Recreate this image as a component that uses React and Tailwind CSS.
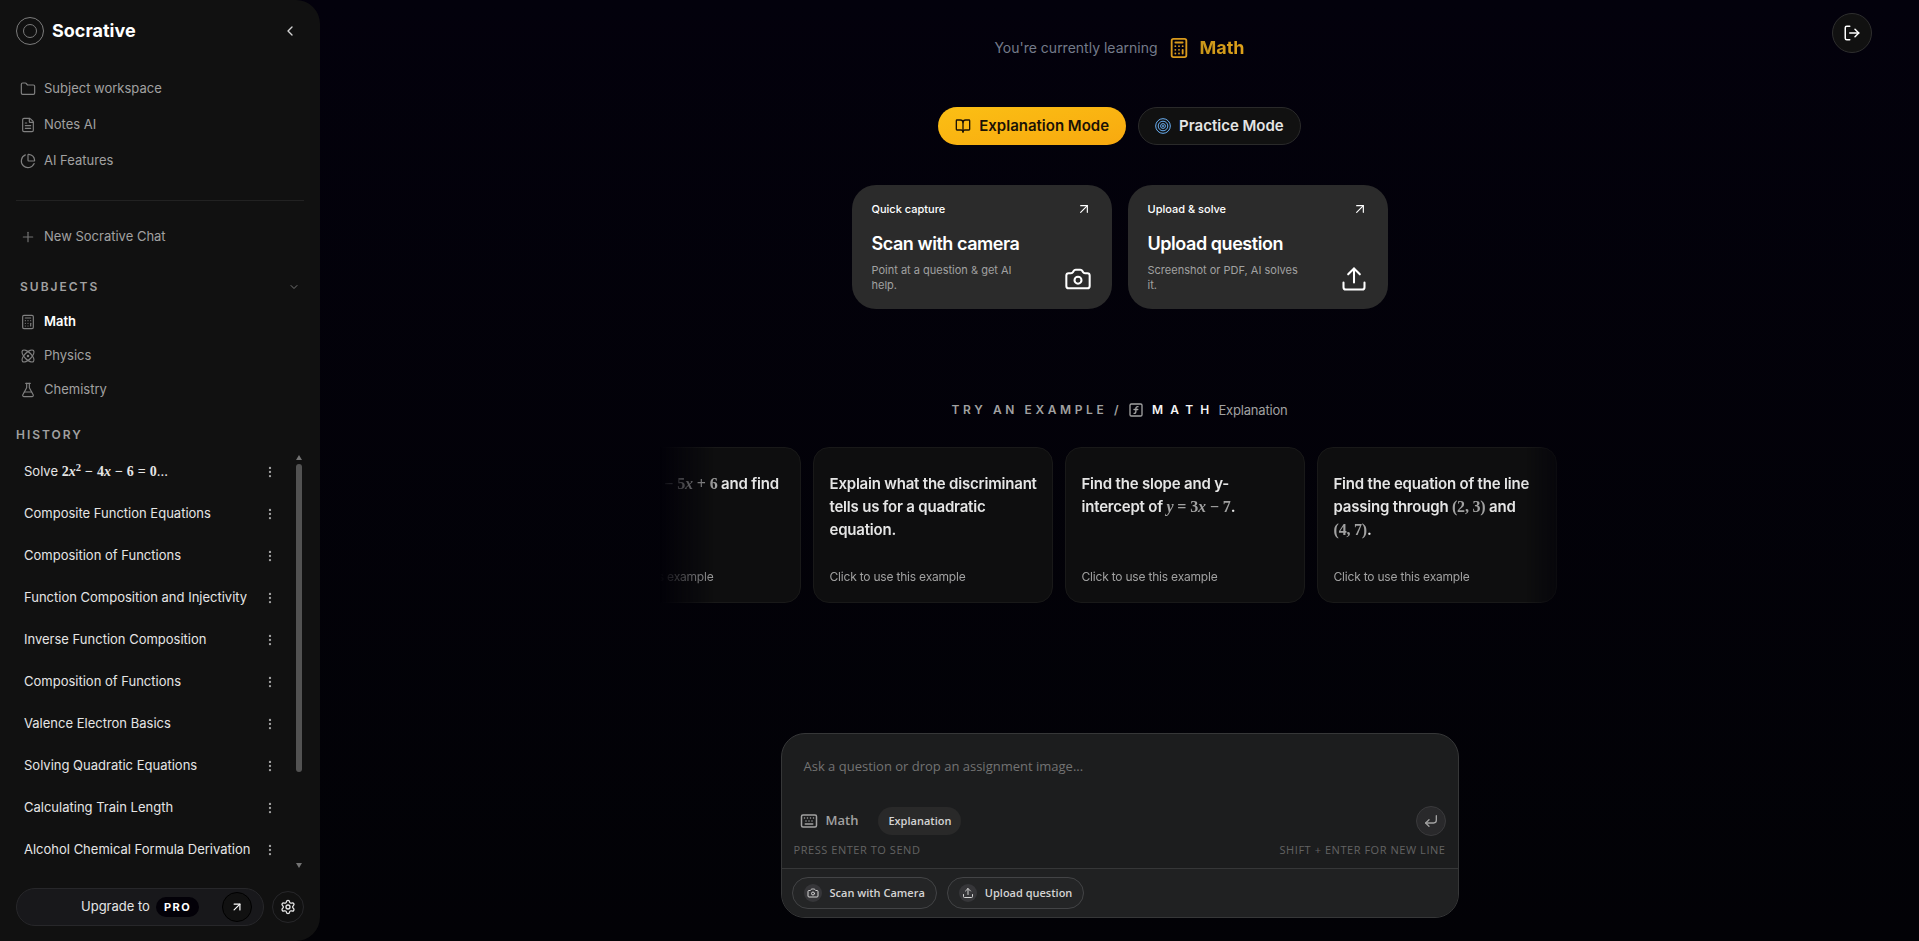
import React, { useState } from "react";
import {
  ArrowUpRight,
  Atom,
  BookOpen,
  Calculator,
  Camera,
  ChartPie,
  ChevronDown,
  ChevronLeft,
  CornerDownLeft,
  EllipsisVertical,
  FileText,
  FlaskConical,
  Folder,
  Keyboard,
  LogOut,
  Plus,
  Settings,
  SquareFunction,
  Upload,
} from "lucide-react";

const navItems = [
  { label: "Subject workspace", icon: Folder },
  { label: "Notes AI", icon: FileText },
  { label: "AI Features", icon: ChartPie },
];

const subjects = [
  { label: "Math", icon: Calculator },
  { label: "Physics", icon: Atom },
  { label: "Chemistry", icon: FlaskConical },
];

// Inline math
const Tex = ({ children, className = "" }) => (
  <span className={`leading-none whitespace-nowrap font-['Liberation_Serif',serif] ${className}`}>
    {children}
  </span>
);

const Op = ({ children }) => <span className="mx-1">{children}</span>;

const history = [
  <>
    Solve{" "}
    <Tex className="text-sm font-bold">
      2<i>x</i>
      <sup>2</sup>
      <Op>−</Op>4<i>x</i>
      <Op>−</Op>6<Op>=</Op>0
    </Tex>
    ...
  </>,
  "Composite Function Equations",
  "Composition of Functions",
  "Function Composition and Injectivity",
  "Inverse Function Composition",
  "Composition of Functions",
  "Valence Electron Basics",
  "Solving Quadratic Equations",
  "Calculating Train Length",
  "Alcohol Chemical Formula Derivation",
];

const texStyle = "text-base font-bold text-neutral-400";

const examples = [
  <>
    Factorise{" "}
    <Tex className={texStyle}>
      <i>x</i>
      <sup>2</sup>
      <Op>−</Op>5<i>x</i>
      <Op>+</Op>6
    </Tex>{" "}
    and find the roots.
  </>,
  "Explain what the discriminant tells us for a quadratic equation.",
  <>
    Find the slope and y-intercept of{" "}
    <Tex className={texStyle}>
      <i>y</i>
      <Op>=</Op>3<i>x</i>
      <Op>−</Op>7
    </Tex>
    .
  </>,
  <>
    Find the equation of the line passing through <Tex className={texStyle}>(2, 3)</Tex> and{" "}
    <Tex className={texStyle}>(4, 7)</Tex>.
  </>,
];

const TargetIcon = () => (
  <svg viewBox="0 0 24 24" className="size-4" fill="none" stroke="#6bb0f3" strokeWidth="1.5">
    <circle cx="12" cy="12" r="11" />
    <circle cx="12" cy="12" r="7.2" />
    <circle cx="12" cy="12" r="3.6" />
    <circle cx="12" cy="12" r="0.8" fill="#6bb0f3" />
  </svg>
);

const Logo = () => (
  <svg viewBox="0 0 28 28" className="size-7" fill="none" stroke="#7c7c7c">
    <circle cx="14" cy="14" r="13.5" />
    <circle cx="14" cy="14" r="6.5" />
  </svg>
);

const Sidebar = () => {
  const [subject, setSubject] = useState("Math");

  return (
    <aside className="flex h-screen w-80 shrink-0 flex-col rounded-r-3xl bg-[#111111] px-4 pt-[17px] pb-[15px] text-[13px]">
      <div className="flex items-center gap-2">
        <Logo />
        <h1 className="text-lg font-bold text-white">Socrative</h1>
        <button aria-label="Collapse sidebar" className="ml-auto p-1.5 text-neutral-300">
          <ChevronLeft className="size-4" />
        </button>
      </div>

      <nav className="mt-7 flex flex-col gap-1 border-b border-[#222222] pb-[23px]">
        {navItems.map(({ label, icon: Icon }) => (
          <a key={label} href="#" className="flex h-8 items-center gap-2 px-1 text-neutral-400">
            <Icon className="size-4 text-[#808080]" strokeWidth={1.75} />
            {label}
          </a>
        ))}
      </nav>

      <button className="mt-5 flex h-8 items-center gap-2 px-1 text-neutral-400">
        <Plus className="size-4 text-neutral-500" strokeWidth={1.75} />
        New Socrative Chat
      </button>

      <div className="mt-[26px] flex items-center justify-between px-1">
        <h2 className="text-xs font-semibold tracking-[2px] text-neutral-400">SUBJECTS</h2>
        <ChevronDown className="size-3 text-neutral-500" />
      </div>
      <div className="mt-2.5 flex flex-col">
        {subjects.map(({ label, icon: Icon }) => (
          <button
            key={label}
            onClick={() => setSubject(label)}
            className={`flex h-[34px] items-center gap-2 px-1 ${
              subject === label ? "font-semibold text-white" : "text-neutral-400"
            }`}
          >
            <Icon className="size-4 text-[#808080]" strokeWidth={1.75} />
            {label}
          </button>
        ))}
      </div>

      <h2 className="mt-5 text-xs font-semibold tracking-[2px] text-neutral-400">HISTORY</h2>
      <div className="mt-2 flex min-h-0 flex-1">
        <ul className="flex-1 overflow-hidden">
          {history.map((title, i) => (
            <li key={i} className="flex h-[42px] items-center justify-between pr-[19px] pl-2 text-neutral-200">
              <a href="#" className="truncate">
                {title}
              </a>
              <button aria-label="Chat options" className="text-neutral-400">
                <EllipsisVertical className="size-3.5" />
              </button>
            </li>
          ))}
        </ul>
        {/* Scrollbar */}
        <div className="mt-1 mr-0.5 flex w-1.5 flex-col items-center gap-1">
          <span className="border-x-3 border-b-5 border-x-transparent border-b-neutral-500" />
          <span className="w-full flex-1">
            <span className="block h-[78%] rounded-full bg-[#525252]" />
          </span>
          <span className="border-x-3 border-t-5 border-x-transparent border-t-neutral-500" />
        </div>
      </div>

      <div className="mt-5 flex items-center gap-2">
        <button className="flex h-[38px] flex-1 items-center rounded-full border border-[#27272a] bg-[#18181b] pr-[11px] pl-16 text-[13px] text-neutral-200">
          Upgrade to
          <span className="ml-1.5 rounded-full bg-[#030108] px-2 py-0.5 text-[11px] font-bold tracking-[1.5px] text-white">
            PRO
          </span>
          <span className="ml-auto flex size-[30px] items-center justify-center rounded-full border border-black bg-[#111111]">
            <ArrowUpRight className="size-3.5 text-white" />
          </span>
        </button>
        <button
          aria-label="Settings"
          className="flex size-8 items-center justify-center rounded-full border border-[#27272a] text-neutral-200"
        >
          <Settings className="size-4" />
        </button>
      </div>
    </aside>
  );
};

const ActionCard = ({ tag, title, text, icon: Icon }) => (
  <button className="w-[260px] rounded-3xl bg-[#2b2b2b] px-5 py-4 text-left text-white">
    <span className="flex items-center justify-between text-[11px] leading-4 font-medium">
      {tag}
      <ArrowUpRight className="size-4" strokeWidth={1.75} />
    </span>
    <span className="mt-[15px] block text-lg leading-6 font-semibold tracking-tight">{title}</span>
    <span className="mt-[7px] flex items-end justify-between">
      <span className="w-40 text-[11px] leading-[15px] text-neutral-400">{text}</span>
      <Icon className="size-7" strokeWidth={1.75} />
    </span>
  </button>
);

const Composer = () => {
  const [value, setValue] = useState("");

  return (
    <form
      onSubmit={(e) => e.preventDefault()}
      className="mx-auto w-full max-w-[678px] overflow-hidden rounded-3xl border border-[#363738] bg-[#1c1d1e] font-['Open_Sans','Noto_Sans',sans-serif]"
    >
      <div className="px-3 pt-5 pb-2.5">
        <textarea
          rows={1}
          aria-label="Question"
          value={value}
          onChange={(e) => setValue(e.target.value)}
          placeholder="Ask a question or drop an assignment image..."
          className="block h-[52px] w-full resize-none bg-transparent px-2.5 text-[13px] leading-6 text-neutral-200 outline-none placeholder:text-[#737373]"
        />
        <div className="flex items-center">
          <button
            type="button"
            className="flex items-center gap-2 px-1.5 text-[13px] font-semibold text-neutral-400"
          >
            <Keyboard className="size-[18px]" />
            Math
          </button>
          <button
            type="button"
            className="ml-3.5 h-7 rounded-full bg-[#292929] px-2.5 text-[11px] font-semibold text-neutral-300"
          >
            Explanation
          </button>
          <button
            aria-label="Send"
            className="ml-auto flex size-[30px] items-center justify-center rounded-full border border-[#3a3a3c] bg-[#29292b] text-neutral-400"
          >
            <CornerDownLeft className="size-4" />
          </button>
        </div>
        <div className="mt-1.5 flex justify-between text-[11px] leading-4 tracking-wider text-[#636363]">
          <span>PRESS ENTER TO SEND</span>
          <span>SHIFT + ENTER FOR NEW LINE</span>
        </div>
      </div>
      <div className="flex gap-2.5 border-t border-[#363738] bg-[#202122] px-2.5 py-2 text-[11px] font-semibold text-neutral-300">
        <button
          type="button"
          className="flex h-8 items-center gap-2 rounded-full border border-[#434446] bg-[#242526] px-[11px]"
        >
          <span className="flex size-[18px] items-center justify-center rounded-full bg-[#363639]">
            <Camera className="size-3" />
          </span>
          Scan with Camera
        </button>
        <button
          type="button"
          className="flex h-8 items-center gap-2 rounded-full border border-[#434446] bg-[#242526] px-[11px]"
        >
          <span className="flex size-[18px] items-center justify-center rounded-full bg-[#363639]">
            <Upload className="size-3" />
          </span>
          Upload question
        </button>
      </div>
    </form>
  );
};

const App = () => {
  return (
    <div className="flex h-screen overflow-hidden bg-linear-to-b from-[#03010c] to-[#020206] font-[Inter,sans-serif]">
      <Sidebar />

      <main className="relative flex min-w-0 flex-1 flex-col pt-[34px] pb-[23px]">
        <button
          aria-label="Log out"
          className="absolute top-[13px] right-[47px] flex size-10 items-center justify-center rounded-full border border-[#2e2e2e] bg-[#111111] text-white"
        >
          <LogOut className="size-[18px]" />
        </button>

        <div className="flex items-center justify-center">
          <p className="text-sm text-[#747b8a]">You're currently learning</p>
          <Calculator className="ml-2.5 size-[22px] text-[#d99a1c]" />
          <p className="ml-2.5 bg-linear-to-r from-[#c8961a] to-[#e0a21a] bg-clip-text text-lg font-bold text-transparent">
            Math
          </p>
        </div>

        <div className="mt-[45px] flex justify-center gap-3 text-[15px] font-semibold">
          <button className="flex h-[38px] items-center gap-2 rounded-full bg-linear-to-br from-[#fbbf14] to-[#f8a90f] px-[17px] text-[#1a1206]">
            <BookOpen className="size-4" />
            Explanation Mode
          </button>
          <button className="flex h-[38px] items-center gap-2 rounded-full border border-[#2a2a2a] bg-[#111111] px-4 text-neutral-200">
            <TargetIcon />
            Practice Mode
          </button>
        </div>

        <div className="mt-10 flex justify-center gap-4">
          <ActionCard
            tag="Quick capture"
            title="Scan with camera"
            text="Point at a question & get AI help."
            icon={Camera}
          />
          <ActionCard
            tag="Upload & solve"
            title="Upload question"
            text="Screenshot or PDF, AI solves it."
            icon={Upload}
          />
        </div>

        {/* Example carousel */}
        <section className="mt-[91px]">
          <h2 className="flex items-center justify-center text-xs leading-5 font-semibold text-neutral-400">
            <span className="tracking-[0.3em]">TRY AN EXAMPLE /</span>
            <SquareFunction className="mr-2 ml-1.5 size-4" />
            <span className="tracking-[0.6em] text-neutral-100">MATH</span>
            <span className="ml-0.5 text-[13px] font-normal tracking-[-0.2px]">Explanation</span>
          </h2>
          <div className="mx-auto mt-[27px] flex w-full max-w-[920px] justify-end gap-3 overflow-hidden mask-x-from-94% mask-x-to-100% pr-[23px] tracking-[-0.2px]">
            {examples.map((text, i) => (
              <button
                key={i}
                className="flex h-[156px] w-60 shrink-0 flex-col items-start justify-between rounded-2xl border border-[#191919] bg-[#0e0e0f] pt-6 pr-3.5 pb-4 pl-4 text-left"
              >
                <span className="text-[15px] leading-[23px] font-semibold text-neutral-200">{text}</span>
                <span className="text-xs leading-[18px] text-neutral-400">Click to use this example</span>
              </button>
            ))}
          </div>
        </section>

        <div className="mt-auto">
          <Composer />
        </div>
      </main>
    </div>
  );
};

export default App;
